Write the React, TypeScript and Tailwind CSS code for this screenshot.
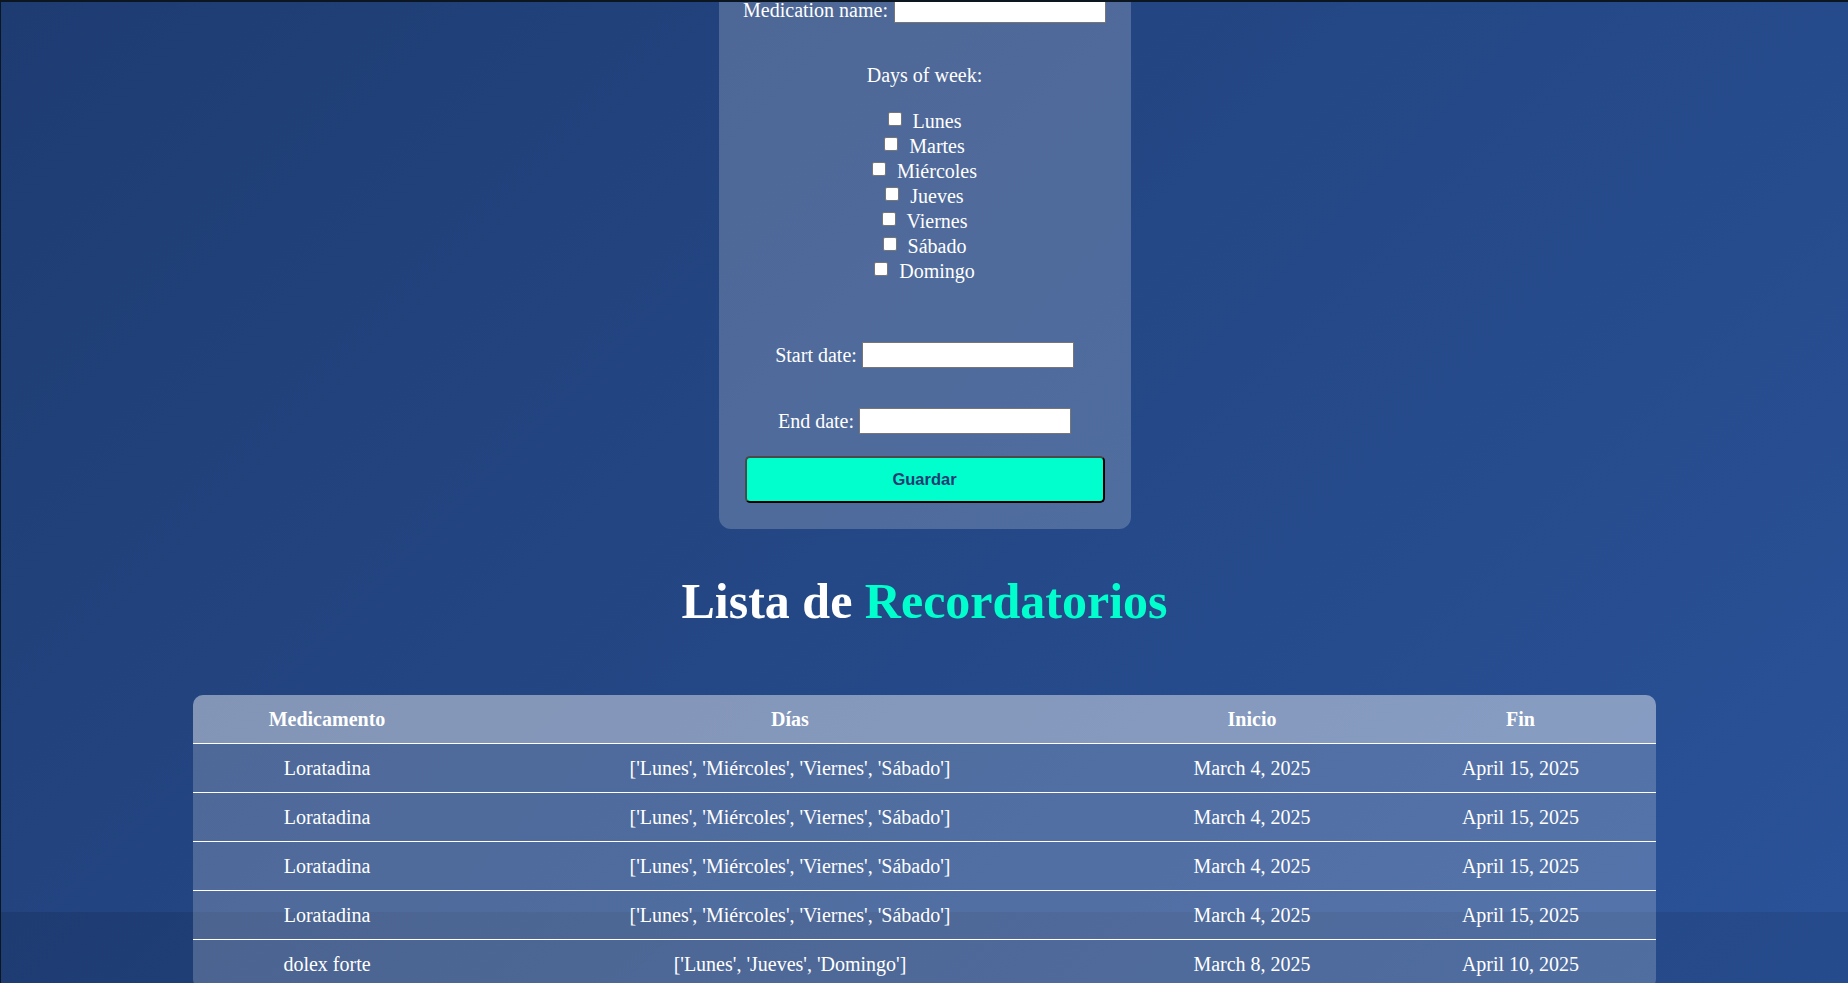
const days = ['Lunes', 'Martes', 'Miércoles', 'Jueves', 'Viernes', 'Sábado', 'Domingo'];

const reminders = [
  { name: 'Loratadina', days: "['Lunes', 'Miércoles', 'Viernes', 'Sábado']", start: 'March 4, 2025', end: 'April 15, 2025' },
  { name: 'Loratadina', days: "['Lunes', 'Miércoles', 'Viernes', 'Sábado']", start: 'March 4, 2025', end: 'April 15, 2025' },
  { name: 'Loratadina', days: "['Lunes', 'Miércoles', 'Viernes', 'Sábado']", start: 'March 4, 2025', end: 'April 15, 2025' },
  { name: 'Loratadina', days: "['Lunes', 'Miércoles', 'Viernes', 'Sábado']", start: 'March 4, 2025', end: 'April 15, 2025' },
  { name: 'dolex forte', days: "['Lunes', 'Jueves', 'Domingo']", start: 'March 8, 2025', end: 'April 10, 2025' },
];

function TextInput() {
  return <input type="text" className="w-[212px] h-[26px] bg-white border border-[#767676] outline-none" />;
}

export default function App() {
  return (
    <div className="h-[983px] overflow-hidden bg-[#0b1620] pt-[2px] pl-[1px]">
      <div className="h-full overflow-hidden bg-[linear-gradient(135deg,#1e3c72,#2a5298)] bg-[length:100%_910px] bg-repeat-y font-['Liberation_Serif','Times_New_Roman',serif] text-white text-[20px]">
        {/* form card, page is scrolled so its top is out of view */}
        <div className="w-[412px] mx-auto -mt-[30px] pt-[25px] pb-[26px] px-[26px] bg-white/20 rounded-[12px]">
          <div className="h-[26px] flex items-center justify-center gap-[6px] whitespace-nowrap">
            <label>Medication name:</label>
            <TextInput />
          </div>

          <div className="mt-[41px] h-[22px] leading-[22px] text-center">Days of week:</div>
          <div className="mt-[22px] flex flex-col">
            {days.map((d) => (
              <label key={d} className="h-[25px] flex items-center justify-center gap-[11px]">
                <input
                  type="checkbox"
                  className="appearance-none w-[14px] h-[14px] m-0 mb-[3px] bg-white border border-[#767676] rounded-[2px]"
                />
                <span>{d}</span>
              </label>
            ))}
          </div>

          <div className="mt-[59px] h-[26px] flex items-center justify-center gap-[5px]">
            <label>Start date:</label>
            <TextInput />
          </div>
          <div className="mt-[40px] h-[26px] flex items-center justify-center gap-[5px]">
            <label>End date:</label>
            <TextInput />
          </div>

          <button className="mt-[22px] w-full h-[47px] bg-[#00ffcc] text-[#1e3c72] font-['Liberation_Sans',Arial,sans-serif] font-bold text-[16.5px] rounded-[5px] border-2 border-[#4a4a4a] border-b-black border-r-black">
            Guardar
          </button>
        </div>

        <h2 className="mt-[44px] h-[56px] leading-[56px] text-center text-[50px] font-bold">
          Lista de <span className="text-[#00ffcc]">Recordatorios</span>
        </h2>

        <div className="mt-[66px] w-[1463px] mx-auto rounded-[10px] overflow-hidden bg-white/20">
          <div className="grid grid-cols-[268px_658px_266px_271px] h-[49px] items-center text-center font-bold bg-white/30 border-b border-white">
            <div>Medicamento</div>
            <div>Días</div>
            <div>Inicio</div>
            <div>Fin</div>
          </div>
          {reminders.map((r, i) => (
            <div key={i} className="grid grid-cols-[268px_658px_266px_271px] h-[49px] items-center text-center border-b border-white">
              <div>{r.name}</div>
              <div>{r.days}</div>
              <div>{r.start}</div>
              <div>{r.end}</div>
            </div>
          ))}
        </div>
      </div>
    </div>
  );
}
